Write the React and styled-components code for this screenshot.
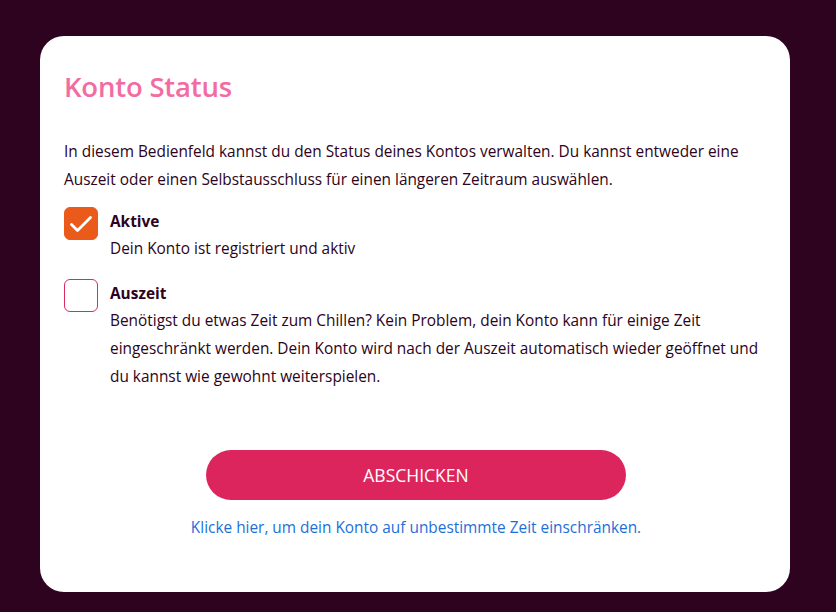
import React, { useState } from "react";
import styled, { createGlobalStyle } from "styled-components";

const GlobalStyle = createGlobalStyle`
  html, body {
    margin: 0;
    padding: 0;
    background: #2d0320;
  }
  body {
    font-family: "Open Sans", "Liberation Sans", sans-serif;
  }
`;

const Page = styled.div`
  width: 836px;
  height: 612px;
  box-sizing: border-box;
  padding: 36px 46px 20px 40px;
`;

const Card = styled.div`
  background: #ffffff;
  border-radius: 24px;
  height: 556px;
  box-sizing: border-box;
  padding: 32px 22px 0 24px;
  color: #2d0320;
`;

const Title = styled.h1`
  margin: 0;
  font-size: 27.5px;
  line-height: 38px;
  font-weight: 600;
  color: #f26ca3;
  letter-spacing: -0.2px;
`;

const Intro = styled.p`
  margin: 32px 0 15px;
  font-size: 15.4px;
  line-height: 28px;
`;

const Option = styled.div`
  display: flex;
  gap: 12px;
  margin-bottom: 18px;
`;

const Box = styled.button`
  flex: 0 0 auto;
  width: 34px;
  height: 33px;
  margin-top: -2px;
  padding: 0;
  border-radius: 6px;
  border: 1px solid ${(p) => (p.checked ? "#ea5a1b" : "#dc2a5e")};
  background: ${(p) => (p.checked ? "#ea5a1b" : "#ffffff")};
  display: flex;
  align-items: center;
  justify-content: center;
  cursor: pointer;
`;

const OptionText = styled.div`
  font-size: 15.4px;
  line-height: 28px;
`;

const OptionTitle = styled.div`
  font-weight: 700;
  line-height: 26px;
`;

const Actions = styled.div`
  display: flex;
  flex-direction: column;
  align-items: center;
  margin-top: 59px;
`;

const Submit = styled.button`
  width: 420px;
  height: 50px;
  border: 0;
  border-radius: 25px;
  background: #dc255c;
  color: #ffffff;
  font-family: inherit;
  font-size: 17.5px;
  font-weight: 500;
  cursor: pointer;
`;

const Link = styled.a`
  margin-top: 17px;
  font-size: 15.4px;
  line-height: 21px;
  color: #1d6fd8;
  text-decoration: none;
  cursor: pointer;
`;

const Check = () => (
  <svg width="24" height="20" viewBox="0 0 24 20" fill="none">
    <path
      d="M2.5 10.5 L8.5 16.5 L21.5 3.5"
      stroke="#fff"
      strokeWidth="2.8"
      strokeLinecap="round"
      strokeLinejoin="round"
    />
  </svg>
);

const options = [
  {
    id: "active",
    title: "Aktive",
    text: "Dein Konto ist registriert und aktiv",
  },
  {
    id: "pause",
    title: "Auszeit",
    text:
      "Benötigst du etwas Zeit zum Chillen? Kein Problem, dein Konto kann für einige Zeit eingeschränkt werden. Dein Konto wird nach der Auszeit automatisch wieder geöffnet und du kannst wie gewohnt weiterspielen.",
  },
];

export default function App() {
  const [selected, setSelected] = useState("active");

  return (
    <Page>
      <GlobalStyle />
      <Card>
        <Title>Konto Status</Title>
        <Intro>
          In diesem Bedienfeld kannst du den Status deines Kontos verwalten. Du
          kannst entweder eine Auszeit oder einen Selbstausschluss für einen
          längeren Zeitraum auswählen.
        </Intro>
        {options.map((o) => (
          <Option key={o.id}>
            <Box checked={selected === o.id} onClick={() => setSelected(o.id)}>
              {selected === o.id && <Check />}
            </Box>
            <OptionText>
              <OptionTitle>{o.title}</OptionTitle>
              {o.text}
            </OptionText>
          </Option>
        ))}
        <Actions>
          <Submit>ABSCHICKEN</Submit>
          <Link>Klicke hier, um dein Konto auf unbestimmte Zeit einschränken.</Link>
        </Actions>
      </Card>
    </Page>
  );
}
